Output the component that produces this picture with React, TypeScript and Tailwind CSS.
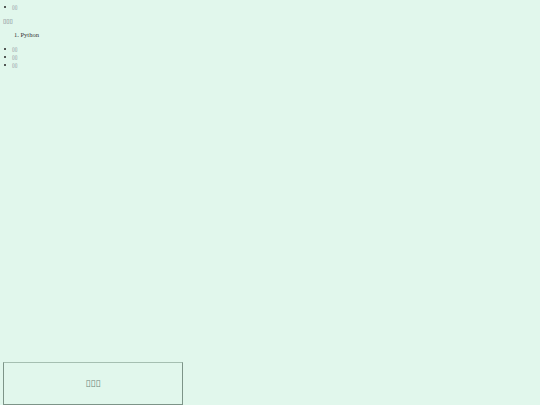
import React from "react";

const T2 = "\u25AF\u25AF";
const T3 = "\u25AF\u25AF\u25AF";

function Bullet({ text }: { text: string }) {
  return (
    <li className="flex items-center h-[8px]">
      <span className="w-[2px] h-[2px] rounded-full bg-[#222] ml-[4px] mr-[6px]" />
      <span className="font-['DejaVu_Sans',sans-serif] text-[5px] text-[#667]">{text}</span>
    </li>
  );
}

export default function App() {
  return (
    <div className="w-[540px] h-[405px] bg-[#e1f7ec] text-[#333] text-[6.5px] leading-[8px] flex flex-col overflow-hidden font-['Liberation_Serif',serif]">
      <ul className="mt-[3px]">
        <Bullet text={T2} />
      </ul>
      <p className="mt-[6px] pl-[3px] h-[8px] font-['DejaVu_Sans',sans-serif] text-[6px] text-[#667]">{T3}</p>
      <ol className="mt-[6px] pl-[14px]">
        <li>1. Python</li>
      </ol>
      <ul className="mt-[6px]">
        <Bullet text={T2} />
        <Bullet text={T2} />
        <Bullet text={T2} />
      </ul>
      <div className="flex-1" />
      <button className="ml-[3px] w-[180px] h-[43px] border border-[#7d9488] border-t-[#a5bfb1] flex items-center justify-center pb-[2px] text-[9px] text-[#6b7f75] shrink-0 font-['DejaVu_Sans',sans-serif]">
        {T3}
      </button>
    </div>
  );
}
